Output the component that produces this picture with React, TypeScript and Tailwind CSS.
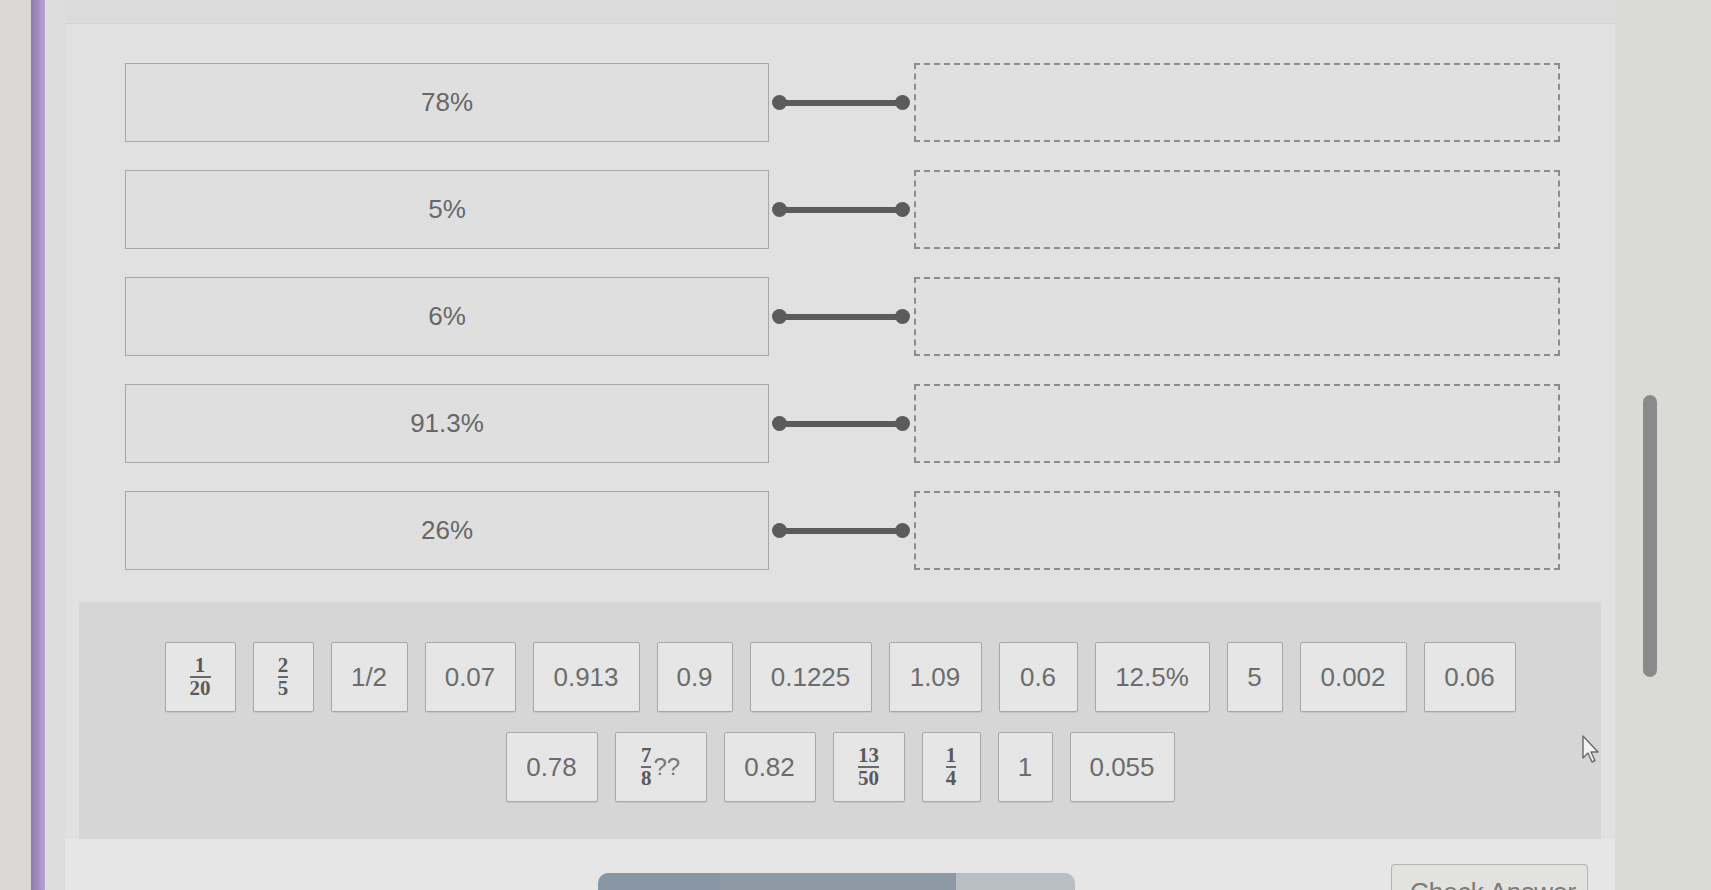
import React from "react";

type Tile = { label: string; w: number; frac?: [string, string]; suffix?: string };

const rowOne: Tile[] = [
  { label: "1/20", w: 71, frac: ["1", "20"] },
  { label: "2/5", w: 61, frac: ["2", "5"] },
  { label: "1/2", w: 77 },
  { label: "0.07", w: 91 },
  { label: "0.913", w: 107 },
  { label: "0.9", w: 76 },
  { label: "0.1225", w: 122 },
  { label: "1.09", w: 93 },
  { label: "0.6", w: 79 },
  { label: "12.5%", w: 115 },
  { label: "5", w: 56 },
  { label: "0.002", w: 107 },
  { label: "0.06", w: 92 },
];

const rowTwo: Tile[] = [
  { label: "0.78", w: 92 },
  { label: "7/8", w: 92, frac: ["7", "8"], suffix: "??" },
  { label: "0.82", w: 92 },
  { label: "13/50", w: 72, frac: ["13", "50"] },
  { label: "1/4", w: 59, frac: ["1", "4"] },
  { label: "1", w: 55 },
  { label: "0.055", w: 105 },
];

const percents = ["78%", "5%", "6%", "91.3%", "26%"];

const Fraction = ({ top, bottom }: { top: string; bottom: string }) => (
  <span className="inline-flex flex-col items-center font-['Liberation_Serif',serif] font-bold text-[21px] leading-[19px] text-[#5a5a5a]">
    <span>{top}</span>
    <span className="h-[1.5px] w-full bg-[#6a6a6a] my-[1px]" />
    <span>{bottom}</span>
  </span>
);

const TileBox = ({ tile }: { tile: Tile }) => (
  <div
    style={{ width: tile.w }}
    className="h-[70px] shrink-0 flex items-center justify-center gap-[2px] bg-[#e6e6e6] border border-[#a8a8a8] rounded-[2px] shadow-[0_1px_1px_rgba(0,0,0,0.08)] text-[26px] text-[#6c6c6c]"
  >
    {tile.frac ? <Fraction top={tile.frac[0]} bottom={tile.frac[1]} /> : tile.label}
    {tile.suffix && <span className="text-[24px] text-[#777]">{tile.suffix}</span>}
  </div>
);

const MatchRow = ({ text }: { text: string }) => (
  <div className="flex items-center h-[79px]">
    <div className="w-[644px] h-full flex items-center justify-center bg-[#dfdfdf] border border-[#a6a6a6] text-[26px] text-[#676767]">
      {text}
    </div>
    <div className="w-[145px] flex items-center pl-[3px] pr-[4px]">
      <span className="w-[15px] h-[15px] rounded-full bg-[#5b5b5b] shrink-0" />
      <span className="flex-1 h-[6px] bg-[#5b5b5b] -mx-[2px]" />
      <span className="w-[15px] h-[15px] rounded-full bg-[#5b5b5b] shrink-0" />
    </div>
    <div className="w-[646px] h-full border-2 border-dashed border-[#8c8c8c] bg-[#e0e0e0]" />
  </div>
);

export default function App() {
  return (
    <div className="relative w-[1711px] h-[890px] overflow-hidden flex bg-[#dad8d8] font-['Liberation_Sans',Arial,sans-serif]">
      <div className="w-[31px] shrink-0 bg-[#dcd7d7]" />
      <div className="w-[14px] shrink-0 bg-gradient-to-r from-[#8c7ea3] via-[#a18cc4] to-[#b7a6d4]" />
      <div className="w-[20px] shrink-0 bg-[#dedddd]" />

      <div className="w-[1550px] shrink-0 flex flex-col">
        <div className="h-[24px] bg-[#dbdbdb] border-b border-[#d2d2d2]" />
        <div className="flex-1 bg-[#e1e1e1] flex flex-col">
          <div className="flex flex-col gap-[28px] pt-[39px] pl-[60px]">
            {percents.map((p) => (
              <MatchRow key={p} text={p} />
            ))}
          </div>

          <div className="mt-[32px] mx-[14px] h-[237px] bg-[#d6d6d6] flex flex-col items-center gap-[20px] pt-[40px]">
            <div className="flex gap-[17px]">
              {rowOne.map((t) => (
                <TileBox key={t.label} tile={t} />
              ))}
            </div>
            <div className="flex gap-[17px]">
              {rowTwo.map((t) => (
                <TileBox key={t.label} tile={t} />
              ))}
            </div>
          </div>

          <div className="flex-1 flex items-end bg-[#e6e6e6]">
            <div className="ml-[533px] h-[17px] w-[477px] flex rounded-t-[10px] overflow-hidden">
              <div className="w-[122px] bg-[#8796a2]" />
              <div className="w-[236px] bg-[#8d9aa5]" />
              <div className="flex-1 bg-[#b8bec2]" />
            </div>
            <div className="ml-[316px] h-[26px] w-[197px] bg-[#e2e2de] border border-b-0 border-[#b5b5b1] rounded-t-[4px] pl-[18px] pt-[14px] overflow-hidden text-[26px] leading-none text-[#7a7a7a]">
              Check Answer
            </div>
          </div>
        </div>
      </div>

      <div className="flex-1 bg-[#dadad6] pl-[28px] pt-[395px]">
        <div className="w-[14px] h-[282px] rounded-full bg-[#8a8a8a]" />
      </div>

      <svg
        className="absolute left-[1581px] top-[734px]"
        width="20"
        height="30"
        viewBox="0 0 20 30"
      >
        <path
          d="M2 2 L2 24 L7 19 L11 28 L14 26.5 L10 18 L17 18 Z"
          fill="#f2f2f2"
          stroke="#6a6a6a"
          strokeWidth="1.4"
          strokeLinejoin="round"
        />
      </svg>
    </div>
  );
}
